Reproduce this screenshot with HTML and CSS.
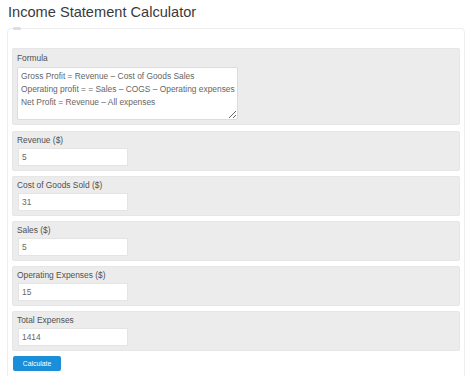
FILE: index.html
```html
<!DOCTYPE html>
<html>
<head>
<meta charset="utf-8">
<link rel="stylesheet" href="styles.css">
</head>
<body>
<h1 class="title">Income Statement Calculator</h1>
<div class="card">
  <span class="pill"></span>
  <div class="panel panel-formula">
    <div class="label">Formula</div>
    <textarea class="area" wrap="off">Gross Profit = Revenue – Cost of Goods Sales
Operating profit = = Sales – COGS – Operating expenses
Net Profit = Revenue – All expenses</textarea>
  </div>
  <div class="panel">
    <div class="label">Revenue ($)</div>
    <input class="field" type="text" value="5">
  </div>
  <div class="panel">
    <div class="label">Cost of Goods Sold ($)</div>
    <input class="field" type="text" value="31">
  </div>
  <div class="panel">
    <div class="label">Sales ($)</div>
    <input class="field" type="text" value="5">
  </div>
  <div class="panel">
    <div class="label">Operating Expenses ($)</div>
    <input class="field" type="text" value="15">
  </div>
  <div class="panel panel-last">
    <div class="label">Total Expenses</div>
    <input class="field" type="text" value="1414">
  </div>
  <button class="btn">Calculate</button>
</div>
</body>
</html>
```

FILE: styles.css
```css
html, body {
  margin: 0;
  padding: 0;
  background: #ffffff;
  font-family: "Liberation Sans", Arial, sans-serif;
}
.title {
  margin: 4px 8px 0 8px;
  font-size: 14.6px;
  line-height: 17px;
  font-weight: normal;
  color: #3a3a3a;
}
.card {
  position: relative;
  margin: 7px 9px 0 7px;
  border: 1px solid #eeeeee;
  border-radius: 4px;
  padding: 19px 4px 20px 4px;
  display: flex;
  flex-direction: column;
  align-items: stretch;
}
.pill {
  position: absolute;
  left: 5px;
  top: -2px;
  width: 8px;
  height: 3px;
  border-radius: 2px;
  background: #dddddd;
}
.panel {
  background: #ececec;
  border: 1px solid #e6e6e6;
  border-radius: 2px;
  padding: 2px 4px 4px 4px;
  margin-bottom: 5px;
  display: flex;
  flex-direction: column;
  align-items: flex-start;
}
.panel-formula {
  padding-top: 3px;
  margin-bottom: 6px;
}
.panel-formula .label {
  margin-bottom: 2px;
}
.panel-last {
  margin-bottom: 5px;
}
.label {
  font-size: 8.4px;
  line-height: 13px;
  color: #505050;
  margin-bottom: 1px;
}
.field {
  box-sizing: border-box;
  width: 110px;
  height: 18px;
  margin: 0 0 0 1px;
  padding: 0 3px;
  border: 1px solid #e4e4e4;
  border-radius: 0;
  background: #ffffff;
  font-family: "Liberation Sans", Arial, sans-serif;
  font-size: 8.4px;
  color: #666666;
  outline: none;
}
.area {
  box-sizing: border-box;
  width: 221px;
  height: 53px;
  margin: 0;
  padding: 2px 0 2px 3px;
  border: 1px solid #dcdcdc;
  border-radius: 2px;
  background: #ffffff;
  font-family: "Liberation Sans", Arial, sans-serif;
  font-size: 8.4px;
  line-height: 13px;
  color: #666666;
  resize: both;
  overflow: hidden;
  white-space: pre;
  outline: none;
}
.btn {
  align-self: flex-start;
  width: 48px;
  height: 15px;
  padding: 0;
  border: none;
  border-radius: 2px;
  background: #1a8ed8;
  color: #ffffff;
  font-family: "Liberation Sans", Arial, sans-serif;
  font-size: 6.8px;
  line-height: 15px;
  margin-left: 1px;
}
```
